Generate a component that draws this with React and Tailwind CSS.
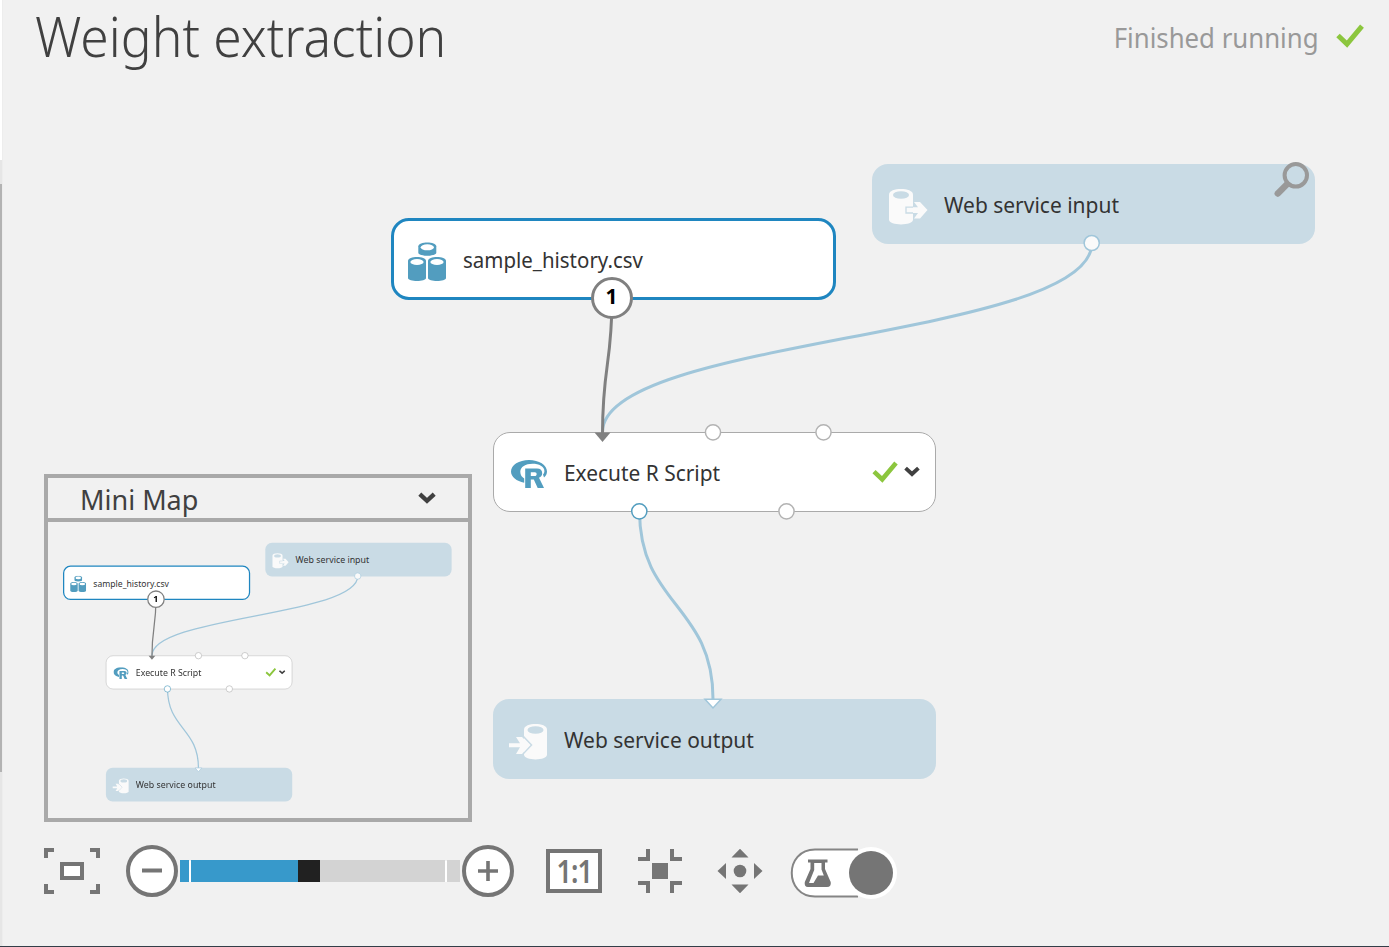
const WIRE = "#a0c6da";

function Cylinders() {
  return (
    <svg viewBox="0 0 38 40" className="h-10 w-[38px] shrink-0">
      {[[10.3, 0.3, 13.5], [0, 15, 24], [20, 15, 24]].map(([x, y, h]) => (
        <g key={`${x}-${y}`} transform={`translate(${x} ${y})`}>
          <path d={`M0 4C0 -1.2 18 -1.2 18 4V${h - 3}C18 ${h + 1} 0 ${h + 1} 0 ${h - 3}Z`} fill="#529dbf" />
          <ellipse cx="9" cy="5" rx="6.6" ry="3" fill="#fff" />
        </g>
      ))}
      <path d="M10 14.2Q15 13 19 16.5Q23 13 29 14.2" fill="none" stroke="#fff" strokeWidth="1.2" />
    </svg>
  );
}

function InputIcon() {
  return (
    <svg viewBox="0 0 40 38" className="h-[38px] w-10 shrink-0">
      <path d="M1 6.5C1 -.8 25 -.8 25 6.5V31.5C25 38 1 38 1 31.5Z" fill="#fafafa" />
      <ellipse cx="13" cy="7" rx="8" ry="3.8" fill="#c9dbe5" />
      <path d="M18 19.2H30L26 14H32L39.5 22L32 30.5H26L30 25H18Z" fill="#fafafa" />
      <path d="M25 19.2H18V25H25" fill="none" stroke="#c9dbe5" strokeWidth="1.3" />
    </svg>
  );
}

function OutputIcon() {
  return (
    <svg viewBox="0 0 40 38" className="h-[38px] w-10 shrink-0">
      <path d="M16 6.5C16 -.8 39 -.8 39 6.5V31.5C39 38 16 38 16 31.5Z" fill="#fafafa" />
      <ellipse cx="27.5" cy="7" rx="8" ry="3.8" fill="#c9dbe5" />
      <path d="M15.5 13.5L23.5 22L15.5 30.5" fill="none" stroke="#c9dbe5" strokeWidth="1.5" />
      <path d="M1 20.2H12L8 14H14L22 22L14 31H8L12 24.2H1Z" fill="#fafafa" />
    </svg>
  );
}

function RLogo() {
  return (
    <svg viewBox="0 0 36 28" className="h-7 w-9 shrink-0">
      <path
        fillRule="evenodd"
        fill="#529dbf"
        d="M18 0C28 0 36 5 36 11.6C36 14.2 34.8 16 33 17.6L32 14.5C33 13.4 33.4 12.4 33.4 11C33.4 6.5 28 3.8 21.5 3.8C14.5 3.8 9.3 7 9.3 11.8C9.3 15.2 11 17.2 13.2 18.5V22.8C5.5 21.3 0 17 0 11.6C0 5 8 0 18 0Z"
      />
      <path
        fillRule="evenodd"
        fill="#529dbf"
        d="M14.2 8.5H26C29.5 8.5 31.2 10.5 31.2 13.2C31.2 15.5 30 17 28 17.8L33 28H26.7L22.8 19.5H19.8V28H14.2ZM19.8 12.2V16H23.8C26.3 16 26.3 12.2 23.8 12.2Z"
      />
    </svg>
  );
}

function Check({ className }) {
  return (
    <svg viewBox="0 0 28 24" className={className}>
      <path d="M2 11.5L11 20L26 2.2" fill="none" stroke="#8cc63e" strokeWidth="5" />
    </svg>
  );
}

function Chevron({ className }) {
  return (
    <svg viewBox="0 0 18 12" className={className}>
      <path d="M1.8 2.2L9 8.8L16.2 2.2" fill="none" stroke="#404040" strokeWidth="4.4" />
    </svg>
  );
}

const label = "origin-left whitespace-nowrap text-[22px] leading-8 text-[#333]";

function Diagram() {
  return (
    <div className="relative h-[620px] w-[924px]">
      <div className="absolute left-0 top-14 flex h-[82px] w-[445px] items-center rounded-[18px] border-[3px] border-[#1f86c0] bg-white pl-3.5">
        <div className="pt-1.5"><Cylinders /></div>
        <span className={`${label} ml-[17px] scale-x-[0.93]`}>sample_history.csv</span>
      </div>
      <div className="absolute left-[480.5px] top-[1.5px] flex h-20 w-[443.5px] items-center rounded-2xl bg-[#c9dbe5] pl-4">
        <div className="pt-1.5"><InputIcon /></div>
        <span className={`${label} ml-4 scale-x-[0.953]`}>Web service input</span>
      </div>
      <div className="absolute left-[102px] top-[269.5px] flex h-[80.5px] w-[443px] items-center rounded-[17px] border-[1.5px] border-[#aaa] bg-white pl-[17px]">
        <div className="pt-1"><RLogo /></div>
        <span className={`${label} ml-[17px] scale-x-[0.95]`}>Execute R Script</span>
        <Check className="ml-auto h-[22px] w-[26px]" />
        <Chevron className="ml-1.5 mr-[15px] h-[11px] w-4" />
      </div>
      <div className="absolute left-[102px] top-[536.5px] flex h-20 w-[443px] items-center rounded-2xl bg-[#c9dbe5] pl-[15px]">
        <div className="pt-1.5"><OutputIcon /></div>
        <span className={`${label} ml-4 scale-x-[0.953]`}>Web service output</span>
      </div>

      <svg viewBox="391 162 924 620" className="absolute inset-0 h-[620px] w-[924px]">
        <path d="M1092 243C1092 338 602.5 338 602.5 432" fill="none" stroke={WIRE} strokeWidth="3" />
        <path d="M612 298C612 365 602.5 365 602.5 434" fill="none" stroke="#808080" strokeWidth="3" />
        <path d="M639.5 511C639.5 605 713 605 713 699" fill="none" stroke={WIRE} strokeWidth="3" />
        <path d="M594.5 432.5H610.5L602.5 442Z" fill="#808080" />
        <path d="M705 699.2H721L713 708Z" fill="#fff" stroke={WIRE} strokeWidth="1.5" />
        <circle cx="1091.7" cy="243" r="7.6" fill="#fafafa" stroke={WIRE} strokeWidth="1.5" />
        <circle cx="713" cy="432.3" r="7.6" fill="#fff" stroke="#b3b3b3" strokeWidth="1.5" />
        <circle cx="823.5" cy="432.3" r="7.6" fill="#fff" stroke="#b3b3b3" strokeWidth="1.5" />
        <circle cx="786.5" cy="511.3" r="7.6" fill="#fff" stroke="#b3b3b3" strokeWidth="1.5" />
        <circle cx="639.3" cy="511.3" r="7.6" fill="#fff" stroke="#529dbf" strokeWidth="1.5" />
      </svg>
      <div className="absolute left-[200px] top-[115px] flex h-[42px] w-[42px] items-center justify-center rounded-full border-[3px] border-[#808080] bg-white pb-0.5 pr-px text-[21px] font-bold text-black">
        1
      </div>
    </div>
  );
}

function Toolbar() {
  return (
    <div className="flex items-center pl-[41px]">
      <svg viewBox="0 0 56 46" className="h-[46px] w-14" fill="none" stroke="#757575" strokeWidth="4">
        <path d="M2 10V2H10M46 2H54V10M54 36V44H46M10 44H2V36" />
        <rect x="18" y="16" width="20" height="14" fill="#fff" />
      </svg>
      <svg viewBox="0 0 54 54" className="ml-[25px] h-[54px] w-[54px]" fill="none" stroke="#757575" strokeWidth="4">
        <circle cx="27" cy="27" r="24" fill="#fff" />
        <path d="M17 26.5H37" />
      </svg>
      <div className="ml-px flex h-[22px] w-[280px]">
        <div className="w-[9px] bg-[#3799cb]" />
        <div className="mt-px w-0.5 bg-white" />
        <div className="w-[107px] bg-[#3799cb]" />
        <div className="w-[22px] bg-[#212121]" />
        <div className="w-[125px] bg-[#d3d3d3]" />
        <div className="mt-px w-0.5 bg-white" />
        <div className="w-[13px] bg-[#d3d3d3]" />
      </div>
      <svg viewBox="0 0 54 54" className="ml-px h-[54px] w-[54px]" fill="none" stroke="#757575" strokeWidth="4">
        <circle cx="27" cy="27" r="24" fill="#fff" />
        <path d="M17 27H37M27 17V37" strokeWidth="3.6" />
      </svg>
      <div className="ml-[31px] flex h-11 w-14 items-center justify-center border-4 border-[#757575] bg-white text-[32px] font-semibold leading-9 text-[#757575]">
        <span className="scale-x-[0.84] tracking-[-1px]">1:1</span>
      </div>
      <svg viewBox="0 0 44 44" className="ml-9 h-11 w-11" fill="none" stroke="#757575" strokeWidth="4">
        <path d="M0 10H10V0M34 0V10H44M44 34H34V44M10 44V34H0" />
        <rect x="14" y="14" width="16" height="16" fill="#757575" stroke="none" />
      </svg>
      <svg viewBox="0 0 46 46" className="ml-[35px] h-[46px] w-[46px]" fill="#757575">
        <circle cx="23" cy="23" r="6.3" />
        <path d="M14.5 9.5L23 .8L31.5 9.5ZM14.5 36.5L23 45.2L31.5 36.5ZM9 15V31L.5 23ZM37 15V31L45.5 23Z" />
      </svg>
      <svg viewBox="0 0 108 54" className="ml-[26px] mt-1 h-[54px] w-[108px]">
        <path d="M69 3.5H26C-5 3.5 -5 50.5 26 50.5H69" fill="#fff" stroke="#858585" strokeWidth="2" />
        <circle cx="82" cy="27" r="26" fill="#fff" />
        <circle cx="82" cy="27" r="22" fill="#757575" />
        <path d="M19 13.5H38.5V16.5H36V23L41.7 36Q42.5 41 38 41H19Q15 41 15.8 36L21.5 23V16.5H19Z" fill="#757575" />
        <path d="M25.2 17H32.5V23.5L34.8 29.5H29L24.5 37H20L25.2 24Z" fill="#fff" />
      </svg>
    </div>
  );
}

export default function App() {
  return (
    <div className="flex h-[947px] w-[1389px] overflow-hidden border-b border-[#333e48] bg-[#f1f1f1] font-['Noto_Sans',sans-serif]">
      <div className="flex w-[3px] shrink-0 border-r border-[#ededed]">
        <div className="flex w-0.5 flex-col">
          <div className="h-40 bg-white" />
          <div className="h-6 bg-[#e6e6e6]" />
          <div className="h-[588px] bg-[#b3b3b3]" />
          <div className="grow bg-[#e6e6e6]" />
        </div>
      </div>
      <main className="flex grow flex-col">
        <header className="flex h-20 items-start justify-between pl-8 pr-[25px]">
          <h1 className="origin-left scale-x-[0.937] whitespace-nowrap text-[55px] font-light leading-[71px] text-[#404040]">Weight extraction</h1>
          <div className="flex items-center gap-[17px] pt-4">
            <span className="origin-right scale-x-[0.955] whitespace-nowrap text-[27px] leading-[44px] text-[#999]">Finished running</span>
            <Check className="mb-1 h-6 w-7" />
          </div>
        </header>
        <div className="relative h-[762px] pl-[388px] pt-[82px]">
          <Diagram />
          <svg viewBox="0 0 36 36" className="absolute left-[1270px] top-[81px] h-9 w-9" fill="none" stroke="#999">
            <circle cx="22.8" cy="14.3" r="11.2" strokeWidth="4" />
            <path d="M14 23.3L4.8 32.5" strokeWidth="6.4" strokeLinecap="round" />
          </svg>
          <section className="absolute left-[41px] top-[394px] flex h-[348px] w-[428px] flex-col border-4 border-[#a9a9a9] bg-[#f1f1f1]">
            <div className="flex h-11 shrink-0 items-center justify-between border-b-4 border-[#a9a9a9] pl-8 pr-8">
              <h2 className="whitespace-nowrap pt-[3px] text-[27px] leading-10 text-[#404040]">Mini Map</h2>
              <Chevron className="h-3 w-[18px]" />
            </div>
            <div className="pl-[15.3px] pt-[19.8px]">
              <div className="h-[261px] w-[389px]">
                <div className="origin-top-left scale-[0.4206]">
                  <Diagram />
                </div>
              </div>
            </div>
          </section>
        </div>
        <Toolbar />
      </main>
    </div>
  );
}
